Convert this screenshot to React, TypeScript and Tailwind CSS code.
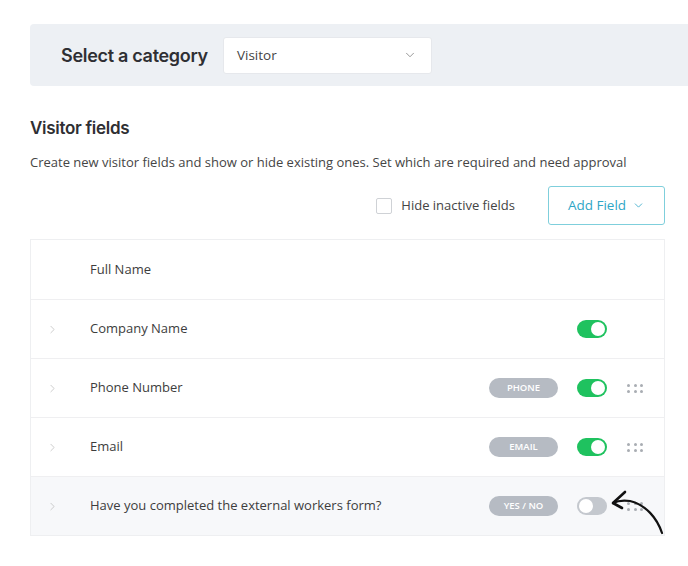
import { ChevronDown, ChevronRight } from 'lucide-react';

type Field = {
    label: string;
    badge?: string;
    active: boolean;
    expandable: boolean;
    toggle: boolean;
    draggable: boolean;
    muted?: boolean;
};

const fields: Field[] = [
    { label: 'Full Name', active: true, expandable: false, toggle: false, draggable: false },
    { label: 'Company Name', active: true, expandable: true, toggle: true, draggable: false },
    { label: 'Phone Number', badge: 'PHONE', active: true, expandable: true, toggle: true, draggable: true },
    { label: 'Email', badge: 'EMAIL', active: true, expandable: true, toggle: true, draggable: true },
    {
        label: 'Have you completed the external workers form?',
        badge: 'YES / NO',
        active: false,
        expandable: true,
        toggle: true,
        draggable: true,
        muted: true,
    },
];

function Toggle({ on }: { on: boolean }) {
    return (
        <div
            className={`w-[30px] h-[18px] rounded-full flex items-center px-[2px] ${
                on ? 'bg-[#1fc25f] justify-end' : 'bg-[#c4c8ce] justify-start'
            }`}
        >
            <div className="w-[14px] h-[14px] rounded-full bg-white" />
        </div>
    );
}

function DragDots() {
    return (
        <div className="grid grid-cols-3 gap-x-[4px] gap-y-[3px] w-[16px]">
            {Array.from({ length: 6 }).map((_, i) => (
                <div key={i} className="w-[3px] h-[3px] rounded-full bg-[#a9adb3]" />
            ))}
        </div>
    );
}

function FieldRow({ field, first }: { field: Field; first: boolean }) {
    return (
        <div
            className={`flex items-center h-[59px] pr-[21px] ${first ? '' : 'border-t border-[#efeff1]'} ${
                field.muted ? 'bg-[#f7f8fa]' : 'bg-white'
            }`}
        >
            <div className="w-[59px] pl-[15px] flex items-center">
                {field.expandable && <ChevronRight size={13} strokeWidth={1.2} className="text-[#b3b3b3]" />}
            </div>
            <span className="flex-1 text-[13px] text-[#3d3d3d]">{field.label}</span>
            {field.badge && (
                <span className="w-[69px] h-[20px] rounded-full bg-[#b6bbc3] text-white text-[9.5px] font-semibold flex items-center justify-center">
                    {field.badge}
                </span>
            )}
            <div className="ml-[19px] w-[30px]">{field.toggle && <Toggle on={field.active} />}</div>
            <div className="ml-[20px] w-[16px]">{field.draggable && <DragDots />}</div>
        </div>
    );
}

export default function App() {
    return (
        <div className="relative min-h-screen bg-white pt-[24px] pl-[30px] font-['Open_Sans',sans-serif] text-[#333]">
            <div className="h-[62px] bg-[#edf0f4] rounded-l-[4px] flex items-center pl-[31px]">
                <h1 className="font-['Inter',sans-serif] font-semibold text-[18px] tracking-[-0.3px] text-[#2f2f33]">
                    Select a category
                </h1>
                <div className="ml-[15px] w-[209px] h-[37px] bg-white rounded-[3px] border border-[#e6e8ec] flex items-center justify-between pl-[13px] pr-[14px]">
                    <span className="text-[13.5px] text-[#444]">Visitor</span>
                    <ChevronDown size={14} strokeWidth={1.3} className="text-[#777]" />
                </div>
            </div>

            <div className="w-[635px]">
                <h2 className="mt-[30px] font-['Inter',sans-serif] font-semibold text-[17px] leading-[24px] tracking-[-0.3px] text-[#2f2f33]">
                    Visitor fields
                </h2>
                <p className="mt-[12px] text-[13px] leading-[20px] text-[#454545] whitespace-nowrap">
                    Create new visitor fields and show or hide existing ones. Set which are required and need approval
                </p>

                <div className="mt-[14px] flex items-center justify-end">
                    <label className="flex items-center gap-[9px]">
                        <span className="w-[16px] h-[16px] border border-[#cfd2d6] rounded-[2px] bg-white" />
                        <span className="text-[13px] text-[#444]">Hide inactive fields</span>
                    </label>
                    <button className="ml-[33px] w-[117px] h-[39px] border border-[#7fcfdc] rounded-[3px] flex items-center justify-center gap-[6px] text-[#2fa6c6] text-[13.5px] font-medium">
                        Add Field
                        <ChevronDown size={13} strokeWidth={1.5} />
                    </button>
                </div>

                <div className="mt-[14px] border border-[#eeeff1] overflow-hidden">
                    {fields.map((f, i) => (
                        <FieldRow key={f.label} field={f} first={i === 0} />
                    ))}
                </div>
            </div>

            <svg className="absolute left-0 top-0 pointer-events-none" width="688" height="566" viewBox="0 0 688 566" fill="none">
                <path
                    d="M662 533 C 657 518, 646 505, 630 501 C 623 500, 617 501, 613 503"
                    stroke="#111"
                    strokeWidth="2.2"
                    strokeLinecap="round"
                />
                <path d="M625 492 L 613 503 L 622 508" stroke="#111" strokeWidth="2.6" strokeLinecap="round" strokeLinejoin="round" />
            </svg>
        </div>
    );
}
